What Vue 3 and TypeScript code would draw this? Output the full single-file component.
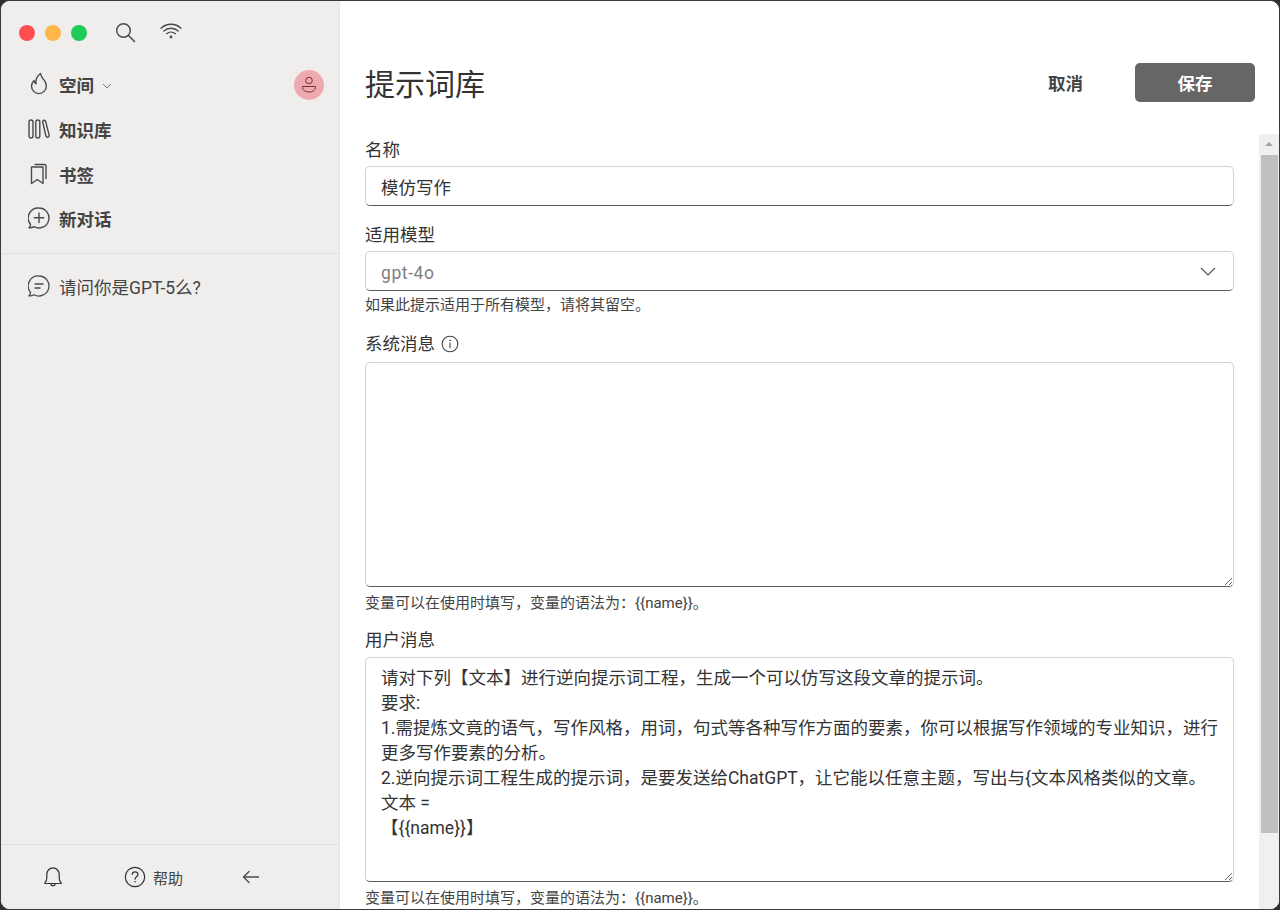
<script setup lang="ts">
const userMessage = `请对下列【文本】进行逆向提示词工程，生成一个可以仿写这段文章的提示词。
要求:
1.需提炼文竟的语气，写作风格，用词，句式等各种写作方面的要素，你可以根据写作领域的专业知识，进行更多写作要素的分析。
2.逆向提示词工程生成的提示词，是要发送给ChatGPT，让它能以任意主题，写出与{文本风格类似的文章。
文本 =
【{{name}}】`
const hint = '变量可以在使用时填写，变量的语法为：{{name}}。'
</script>

<template>
  <div class="window">
    <aside class="sidebar">
      <div class="top">
        <span class="light red"></span>
        <span class="light yellow"></span>
        <span class="light green"></span>
        <svg class="search" width="22" height="22" viewBox="0 0 22 22" fill="none" stroke="#4a4a4a" stroke-width="1.5" stroke-linecap="round">
          <circle cx="9.5" cy="9.5" r="6.8" />
          <path d="M14.5 14.5 20.5 20.5" />
        </svg>
        <svg class="wifi" width="22" height="18" viewBox="0 0 22 18" fill="none" stroke="#4a4a4a" stroke-width="1.3" stroke-linecap="round">
          <path d="M1 6.2C6.6.9 15.4.9 21 6.2" />
          <path d="M3.8 9C7.8 5.3 14.2 5.3 18.2 9" />
          <path d="M6.6 11.7C9.1 9.6 12.9 9.6 15.4 11.7" />
          <circle cx="11" cy="15" r="1.4" fill="#4a4a4a" stroke="none" />
        </svg>
      </div>

      <nav class="nav">
        <div class="row">
          <svg class="icon" width="22" height="24" viewBox="0 0 22 24" fill="none" stroke="#4a4a4a" stroke-width="1.4" stroke-linejoin="round">
            <path d="M12.5 1.5c.6 3.6 2.4 5 4 7.2 1.2 1.7 1.8 3.4 1.8 5.3a7.4 7.6 0 0 1-14.8 0c0-2.2.9-4 2.5-5.6.2 1.6.8 2.7 2 3.4C7.5 8 9 4 12.5 1.5Z" />
          </svg>
          <span class="strong">空间</span>
          <svg class="caret" width="10" height="6" viewBox="0 0 10 6" fill="none" stroke="#777" stroke-width="1">
            <path d="M1 1 5 5 9 1" />
          </svg>
          <span class="avatar">
            <svg width="16" height="18" viewBox="0 0 16 18" fill="none" stroke="#7c2a2a" stroke-width="1">
              <circle cx="8" cy="4.5" r="3.3" />
              <path d="M1.5 10.5h13c.3 3.5-2.5 5.5-6.5 5.5s-6.8-2-6.5-5.500Z" />
            </svg>
          </span>
        </div>
        <div class="row">
          <svg class="icon" width="22" height="20" viewBox="0 0 22 20" fill="none" stroke="#4a4a4a" stroke-width="1.4">
            <rect x="1" y="1" width="4" height="18" rx="2" />
            <rect x="7.8" y="1" width="4" height="18" rx="2" />
            <path d="M14.6 2.5c.5-1.5 2.3-1.8 3-.2l3.6 14c.3 2-2.5 2.7-3.3.8Z" />
          </svg>
          <span class="strong">知识库</span>
        </div>
        <div class="row">
          <svg class="icon" width="22" height="22" viewBox="0 0 22 22" fill="none" stroke="#4a4a4a" stroke-width="1.4" stroke-linejoin="round">
            <path d="M3.5 4H15v16.5L9.25 16.5 3.5 20.5Z" />
            <path d="M6.5 1.5h10A1.5 1.5 0 0 1 18 3v13" />
          </svg>
          <span class="strong">书签</span>
        </div>
        <div class="row">
          <svg class="icon" width="22" height="22" viewBox="0 0 22 22" fill="none" stroke="#4a4a4a" stroke-width="1.4" stroke-linecap="round" stroke-linejoin="round">
            <path d="M11 1a10 10 0 1 1-5 18.7C4.5 20.6 3 21 1 20.8c1-1 1.7-2.2 1.5-3.5A10 10 0 0 1 11 1Z" />
            <path d="M11 6v9.500M6.300 10.800h9.400" />
          </svg>
          <span class="strong">新对话</span>
        </div>
      </nav>

      <div class="history">
        <div class="row chat">
          <svg class="icon" width="22" height="22" viewBox="0 0 22 22" fill="none" stroke="#4a4a4a" stroke-width="1.3" stroke-linecap="round" stroke-linejoin="round">
            <path d="M11 1a10 10 0 1 1-5 18.7C4.5 20.6 3 21 1 20.8c1-1 1.7-2.2 1.5-3.5A10 10 0 0 1 11 1Z" />
            <path d="M7 9h8M7 13h5" />
          </svg>
          <span>请问你是GPT-5么?</span>
        </div>
      </div>

      <footer class="foot">
        <svg width="20" height="22" viewBox="0 0 20 22" fill="none" stroke="#333" stroke-width="1.2" stroke-linejoin="round">
          <path d="M2 16.5c1.5-1 1.8-2.5 1.8-4.5V8.5a6.2 6.7 0 0 1 12.4 0V12c0 2 .3 3.5 1.800 4.500.5.500.2 1-.4 1H2.400c-.6 0-.9-.5-.4-1Z" />
          <path d="M8 18c0 2.300 4 2.300 4 0" />
        </svg>
        <div class="help">
          <svg width="22" height="22" viewBox="0 0 22 22" fill="none" stroke="#333" stroke-width="1.2" stroke-linecap="round">
            <circle cx="11" cy="11" r="9.7" />
            <path d="M8.2 8.5c.2-3.6 5.8-3.6 5.8-.1 0 2.300-3 2.300-3 4.800" />
            <circle cx="11" cy="15.8" r=".8" fill="#333" stroke="none" />
          </svg>
          <span>帮助</span>
        </div>
        <svg width="18" height="14" viewBox="0 0 18 14" fill="none" stroke="#4a4a4a" stroke-width="1.3" stroke-linecap="round" stroke-linejoin="round">
          <path d="M16.5 7h-15M7 1.5 1.5 7 7 12.5" />
        </svg>
      </footer>
    </aside>

    <main class="main">
      <header class="head">
        <h1>提示词库</h1>
        <button class="cancel" type="button">取消</button>
        <button class="save" type="button">保存</button>
      </header>

      <div class="body">
        <form class="form">
          <label class="label first">名称</label>
          <input class="field" value="模仿写作" />

          <label class="label second">适用模型</label>
          <div class="field select">
            <span class="model">gpt-4o</span>
            <svg width="16" height="9" viewBox="0 0 16 9" fill="none" stroke="#555" stroke-width="1.2">
              <path d="M1 1 8 8 15 1" />
            </svg>
          </div>
          <p class="hint">如果此提示适用于所有模型，请将其留空。</p>

          <label class="label third">
            系统消息
            <svg width="18" height="18" viewBox="0 0 18 18" fill="none" stroke="#444" stroke-width="1.1" stroke-linecap="round">
              <circle cx="9" cy="9" r="7.8" />
              <path d="M9 8v4.800" />
              <circle cx="9" cy="5.4" r=".8" fill="#444" stroke="none" />
            </svg>
          </label>
          <textarea class="field area"></textarea>
          <p class="hint">{{ hint }}</p>

          <label class="label fourth">用户消息</label>
          <textarea class="field area" :value="userMessage"></textarea>
          <p class="hint">{{ hint }}</p>
        </form>

        <div class="scrollbar">
          <span class="arrow"></span>
          <span class="thumb"></span>
        </div>
      </div>
    </main>
  </div>
</template>

<style>
html,
body {
  margin: 0;
  background: #2e2e2e;
}
</style>

<style scoped>
.window {
  box-sizing: border-box;
  display: flex;
  width: 1280px;
  height: 910px;
  border: 1px solid #3a3a3a;
  border-radius: 10px;
  overflow: hidden;
  background: #fff;
  color: #333;
  font-family: Roboto, "Noto Sans CJK SC", sans-serif;
  font-size: 17.5px;
}

.sidebar {
  flex: 0 0 338px;
  display: flex;
  flex-direction: column;
  background: #efeeec;
  color: #444;
}

.top {
  display: flex;
  align-items: center;
  height: 62px;
  padding: 1px 0 0 18px;
  box-sizing: border-box;
}

.light {
  width: 16px;
  height: 16px;
  border-radius: 50%;
  margin-right: 10px;
}

.red { background: #ff4d50; }
.yellow { background: #ffb648; }
.green { background: #1fc95a; }

.search {
  margin-left: 17px;
  margin-top: -1px;
}

.wifi {
  margin-left: 24px;
  margin-top: -3px;
}

.nav {
  display: flex;
  flex-direction: column;
  padding: 0 15px 0 27px;
  height: 190px;
  border-bottom: 1px solid #e0dfdd;
}

.row {
  display: flex;
  align-items: center;
  flex: 0 0 44px;
  height: 44px;
}

.nav .row:first-child {
  margin-top: -1px;
}

.nav .row:nth-child(2),
.nav .row:nth-child(3) {
  margin-top: 1px;
}

.icon {
  flex: 0 0 auto;
  margin-right: 9px;
  width: 22px;
}

.strong {
  font-weight: 700;
  font-size: 17.5px;
  color: #444;
}

.caret {
  margin-left: 8px;
  margin-top: 3px;
}

.avatar {
  display: flex;
  align-items: center;
  justify-content: center;
  width: 30px;
  height: 30px;
  margin-left: auto;
  margin-top: 2px;
  border-radius: 50%;
  background: #edabb1;
}

.history {
  flex: 1;
  padding: 10px 15px 0 27px;
}

.chat {
  color: #444;
}

.foot {
  display: flex;
  align-items: center;
  height: 65px;
  padding: 0 0 0 42px;
  border-top: 1px solid #e0dfdd;
  box-sizing: border-box;
}

.help {
  display: flex;
  align-items: center;
  gap: 7px;
  margin-left: 61px;
  margin-right: 59px;
  font-size: 15px;
  color: #444;
}

.main {
  flex: 1;
  min-width: 0;
  display: flex;
  flex-direction: column;
  padding-left: 25px;
  background: #fff;
  border-left: 1px solid #e8e8e8;
}

.head {
  display: flex;
  align-items: flex-start;
  flex: 0 0 133px;
  box-sizing: border-box;
  padding: 62px 24px 0 0;
}

h1 {
  flex: 1;
  margin: 0;
  font-size: 30px;
  line-height: 44px;
  font-weight: 400;
  color: #333;
}

.cancel,
.save {
  height: 39px;
  border: 0;
  font: inherit;
  font-size: 17.5px;
  font-weight: 700;
}

.cancel {
  background: none;
  color: #444;
  padding: 0;
  margin-right: 52px;
}

.save {
  width: 120px;
  background: #666;
  border-radius: 5px;
  color: #fff;
}

.body {
  flex: 1;
  min-height: 0;
  display: flex;
  overflow: hidden;
}

.form {
  flex: 0 0 869px;
  display: flex;
  flex-direction: column;
}

.label {
  display: flex;
  align-items: center;
  gap: 6px;
  flex: 0 0 auto;
  height: 24px;
  line-height: 24px;
  color: #333;
}

.first { margin: 4px 0; }
.second { margin: 17px 0 4px; }
.third { margin: 17px 0 6px; }
.fourth { margin: 15px 0 5px; }

.field {
  box-sizing: border-box;
  width: 100%;
  flex: 0 0 auto;
  height: 40px;
  margin: 0;
  padding: 0 15px;
  border: 1px solid #d2d2d2;
  border-bottom-color: #5c5c5c;
  border-radius: 5px;
  outline: none;
  background: #fff;
  font: inherit;
  color: #333;
}

.select {
  display: flex;
  align-items: center;
  justify-content: space-between;
  padding-right: 17px;
  color: #808080;
}

.model {
  padding-top: 3px;
  letter-spacing: .6px;
}

.area {
  display: block;
  height: 225px;
  margin-bottom: 2px;
  padding: 8px 15px;
  line-height: 25px;
  resize: vertical;
}

.hint {
  flex: 0 0 auto;
  height: 20px;
  margin: 4px 0 0;
  font-size: 15px;
  line-height: 20px;
  color: #444;
}

.scrollbar {
  display: flex;
  flex-direction: column;
  flex: 0 0 20px;
  margin-left: 25px;
  background: #f0f0f0;
}

.arrow {
  flex: 0 0 21px;
  position: relative;
}

.arrow::before {
  content: "";
  position: absolute;
  left: 6px;
  top: 8px;
  border-left: 4px solid transparent;
  border-right: 4px solid transparent;
  border-bottom: 4px solid #a3a3a3;
}

.thumb {
  display: block;
  height: 678px;
  margin: 0 1px 0 2px;
  background: #bfbfbf;
}
</style>
